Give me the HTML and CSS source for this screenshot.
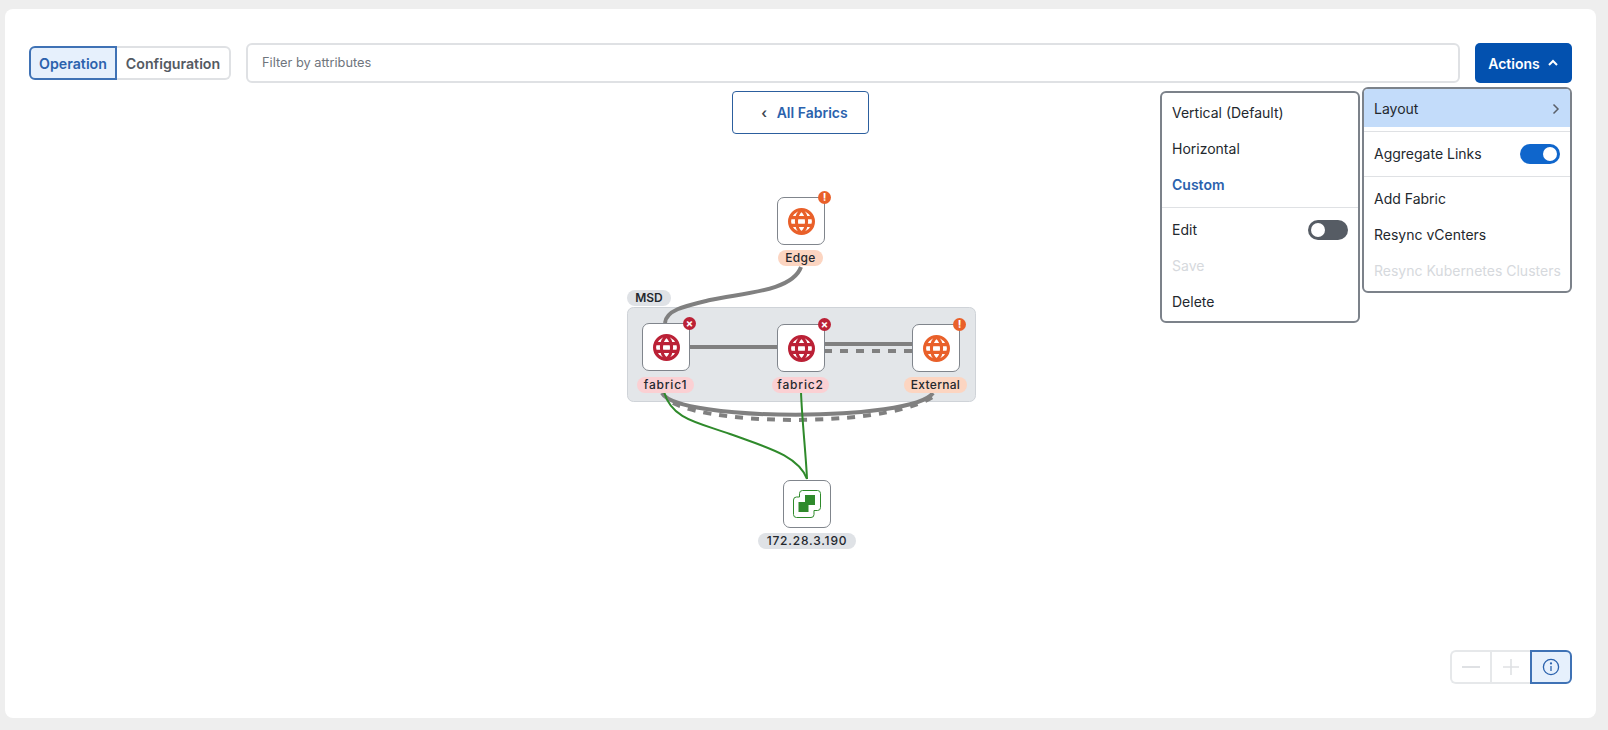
FILE: index.html
```html
<!DOCTYPE html>
<html lang="en">
<head>
    <meta charset="UTF-8">
    <meta name="viewport" content="width=device-width, initial-scale=1.0">
    <title>Fabrics Topology</title>
    <link rel="stylesheet" href="styles.css">
</head>
<body>

    <svg class="defs" width="0" height="0">
        <symbol id="globe" viewBox="0 0 28 28">
            <g fill="none" stroke="currentColor" stroke-width="3.2">
                <circle cx="14" cy="14" r="12.4"/>
                <path d="M14 2C7 7.5 7 20.5 14 26"/>
                <path d="M14 2C21 7.5 21 20.5 14 26"/>
                <path d="M2 10H26M2 18H26"/>
            </g>
        </symbol>
    </svg>

    <div class="card">
        <div class="toolbar">
            <div class="segmented">
                <button class="seg seg-active">Operation</button>
                <button class="seg">Configuration</button>
            </div>
            <div class="filter">Filter by attributes</div>
            <button class="actions">Actions
                <svg width="12" height="8" viewBox="0 0 12 8"><path d="M2 6L6 2L10 6" fill="none" stroke="#fff" stroke-width="2"/></svg>
            </button>
        </div>

        <div class="back-row">
            <button class="back"><span class="back-arrow">‹</span> All Fabrics</button>
        </div>

        <div class="stage">
            <svg class="links" width="361" height="380" viewBox="0 0 361 380">
                <rect class="group" x="7.5" y="127.5" width="348" height="94" rx="6"/>
                <g fill="none" stroke="#808080" stroke-width="4">
                    <path d="M181 87C172 112 120 113 90 120C65 126 46 130 45 143"/>
                    <path d="M69 167H157"/>
                    <path d="M204 164H292"/>
                    <path stroke-dasharray="8 8" d="M204 171H292"/>
                    <path d="M42 213C58 242 292 242 313 213"/>
                    <path stroke-dasharray="8 8" d="M53 223C100 247 280 247 318 213"/>
                </g>
                <g fill="none" stroke="#2f8a2b" stroke-width="2">
                    <path d="M44 212C52 240 80 243 110 254C145 267 178 275 187 299"/>
                    <path d="M181 212C182 240 186 275 187 299"/>
                </g>
            </svg>

            <div class="group-label">MSD</div>

            <div class="node node-edge warn">
                <svg class="globe" width="27" height="27"><use href="#globe"/></svg>
                <span class="badge">!</span>
            </div>
            <div class="label label-edge warn-bg">Edge</div>

            <div class="node node-f1 err">
                <svg class="globe" width="27" height="27"><use href="#globe"/></svg>
                <span class="badge">×</span>
            </div>
            <div class="label label-f1 err-bg">fabric1</div>

            <div class="node node-f2 err">
                <svg class="globe" width="27" height="27"><use href="#globe"/></svg>
                <span class="badge">×</span>
            </div>
            <div class="label label-f2 err-bg">fabric2</div>

            <div class="node node-ext warn">
                <svg class="globe" width="27" height="27"><use href="#globe"/></svg>
                <span class="badge">!</span>
            </div>
            <div class="label label-ext warn-bg">External</div>

            <div class="node node-vc">
                <svg width="28" height="28" viewBox="0 0 28 28">
                    <path d="M6.5 7V3.5a3 3 0 0 1 3-3H24.5a3 3 0 0 1 3 3V17.5a3 3 0 0 1-3 3H21V24.5a3 3 0 0 1-3 3H3.5a3 3 0 0 1-3-3V10a3 3 0 0 1 3-3Z" fill="none" stroke="#2f8a2b"/>
                    <rect x="12" y="5" width="10" height="10" fill="#2f8a2b"/>
                    <rect x="5.5" y="12" width="10" height="10" fill="#2f8a2b"/>
                </svg>
            </div>
            <div class="label label-vc">172.28.3.190</div>
        </div>

        <div class="zoom-row">
            <div class="zoom-controls">
                <button class="zoom-btn">
                    <svg width="20" height="20" viewBox="0 0 20 20"><path d="M1 10H19" stroke="#dfe1e4" stroke-width="2"/></svg>
                </button>
                <button class="zoom-btn">
                    <svg width="18" height="18" viewBox="0 0 18 18"><path d="M1 9H17M9 1V17" stroke="#dfe1e4" stroke-width="1.6"/></svg>
                </button>
                <button class="zoom-btn zoom-info">
                    <svg width="18" height="18" viewBox="0 0 18 18" fill="none" stroke="#2b62ad" stroke-width="1.3">
                        <circle cx="9" cy="9" r="7.6"/>
                        <path d="M9 8V13"/>
                        <circle cx="9" cy="5.4" r=".5"/>
                    </svg>
                </button>
            </div>
        </div>

        <div class="menu menu-sub">
            <div class="menu-item">Vertical (Default)</div>
            <div class="menu-item">Horizontal</div>
            <div class="menu-item selected">Custom</div>
            <div class="divider"></div>
            <div class="menu-item split">Edit <span class="toggle"></span></div>
            <div class="menu-item disabled">Save</div>
            <div class="menu-item">Delete</div>
        </div>

        <div class="menu menu-main">
            <div class="menu-item hovered split">Layout
                <svg width="8" height="12" viewBox="0 0 8 12"><path d="M1.5 1.5L6 6L1.5 10.5" fill="none" stroke="#5a6069" stroke-width="1.5"/></svg>
            </div>
            <div class="divider"></div>
            <div class="menu-item split">Aggregate Links <span class="toggle toggle-on"></span></div>
            <div class="divider"></div>
            <div class="menu-item">Add Fabric</div>
            <div class="menu-item">Resync vCenters</div>
            <div class="menu-item disabled">Resync Kubernetes Clusters</div>
        </div>
    </div>

</body>
</html>
```

FILE: styles.css
```css
* {
    box-sizing: border-box;
}

body {
    margin: 0;
    padding: 9px 12px 12px 5px;
    background-color: #eeeeee;
    font-family: Inter, "Liberation Sans", sans-serif;
    color: #23282e;
}

button {
    font-family: inherit;
}

.defs {
    position: absolute;
}

.card {
    position: relative;
    height: 709px;
    padding-top: 34px;
    background-color: #fff;
    border-radius: 8px;
}

.toolbar {
    display: flex;
    align-items: center;
    height: 40px;
    padding: 0 24px;
}

.segmented {
    display: flex;
    width: 202px;
    height: 34px;
    margin-right: 15px;
}

.seg {
    flex: 1;
    padding: 0;
    background: #fff;
    border: 2px solid #dfe1e4;
    border-left: none;
    border-radius: 0 6px 6px 0;
    font-size: 14.2px;
    font-weight: 600;
    color: #545a62;
}

.seg-active {
    flex: 0 0 88px;
    background: #e6f0fc;
    border: 2px solid #3f72b5;
    border-radius: 6px 0 0 6px;
    color: #2b62ad;
}

.filter {
    flex: 1;
    height: 40px;
    padding-left: 14px;
    border: 2px solid #dfe1e4;
    border-radius: 6px;
    font-size: 12.8px;
    line-height: 36px;
    color: #6f757d;
}

.actions {
    display: flex;
    align-items: center;
    justify-content: center;
    gap: 7px;
    width: 97px;
    height: 40px;
    margin-left: 15px;
    background: #0351af;
    border: none;
    border-radius: 5px;
    font-size: 14px;
    font-weight: 600;
    color: #fff;
}

.back-row {
    display: flex;
    justify-content: center;
    margin-top: 8px;
}

.back {
    width: 137px;
    height: 43px;
    padding-left: 14px;
    background: #fff;
    border: 1px solid #2c5f9e;
    border-radius: 4px;
    font-size: 14px;
    font-weight: 600;
    color: #2b62ad;
}

.back-arrow {
    margin-right: 6px;
    color: #3c4650;
}

.stage {
    position: relative;
    width: 361px;
    height: 380px;
    margin: 46px auto 0;
}

.links {
    position: absolute;
    left: 0;
    top: 0;
}

.group {
    fill: #e3e6e9;
    stroke: #cfd3d8;
}

.group-label {
    position: absolute;
    left: 7px;
    top: 110px;
    width: 44px;
    height: 16px;
    background: #dfe2e6;
    border-radius: 8px;
    font-size: 12px;
    font-weight: 600;
    line-height: 16px;
    text-align: center;
}

.node {
    position: absolute;
    display: flex;
    align-items: center;
    justify-content: center;
    width: 48px;
    height: 48px;
    background: #fff;
    border: 1px solid #80858c;
    border-radius: 7px;
}

.node-edge { left: 157px; top: 17px; }
.node-f1 { left: 22px; top: 143px; }
.node-f2 { left: 157px; top: 144px; }
.node-ext { left: 292px; top: 144px; }
.node-vc { left: 163px; top: 300px; }

.warn { color: #e9602a; }
.err { color: #bb2136; }

.badge {
    position: absolute;
    top: -7px;
    right: -7px;
    width: 13px;
    height: 13px;
    background: currentColor;
    border-radius: 50%;
    font-size: 11px;
    font-weight: 700;
    line-height: 13px;
    text-align: center;
    -webkit-text-fill-color: #fff;
}

.label {
    position: absolute;
    height: 16px;
    border-radius: 8px;
    background: #dfe2e6;
    font-size: 12px;
    font-weight: 500;
    line-height: 16px;
    letter-spacing: .3px;
    text-align: center;
}

.warn-bg { background: #fcd5c1; }
.err-bg { background: #fbd0d3; }

.label-edge { left: 158px; top: 70px; width: 45px; }
.label-f1 { left: 17px; top: 197px; width: 57px; letter-spacing: .8px; }
.label-f2 { left: 152px; top: 197px; width: 57px; letter-spacing: .8px; }
.label-ext { left: 284px; top: 197px; width: 63px; }
.label-vc { left: 138px; top: 353px; width: 98px; letter-spacing: .8px; }

.zoom-row {
    display: flex;
    justify-content: flex-end;
    margin-top: 90px;
    padding-right: 24px;
}

.zoom-controls {
    display: flex;
    width: 122px;
    height: 34px;
}

.zoom-btn {
    display: flex;
    align-items: center;
    justify-content: center;
    flex: 1;
    padding: 0;
    background: #fff;
    border: 2px solid #e6e8ea;
    border-right: none;
}

.zoom-btn:first-child {
    border-radius: 6px 0 0 6px;
}

.zoom-info {
    background: #e6f0fc;
    border: 2px solid #3f72b5;
    border-radius: 0 6px 6px 0;
}

.menu {
    position: absolute;
    background: #fff;
    border: 2px solid #7c828a;
    border-radius: 6px;
    font-size: 14px;
}

.menu-main {
    left: 1357px;
    top: 78px;
    width: 210px;
    padding-bottom: 2px;
}

.menu-sub {
    left: 1155px;
    top: 82px;
    width: 200px;
    padding: 2px 0 1px;
}

.menu-item {
    height: 36px;
    padding: 0 10px;
    line-height: 36px;
    white-space: nowrap;
}

.split {
    display: flex;
    align-items: center;
    justify-content: space-between;
}

.hovered {
    height: 38px;
    padding-top: 2px;
    background: #c3dcfa;
    border-radius: 4px 4px 0 0;
}

.selected {
    font-weight: 600;
    color: #2b62ad;
}

.disabled {
    color: #d6d9dd;
}

.divider {
    height: 1px;
    margin: 4px 0;
    background: #dfe1e4;
}

.toggle {
    position: relative;
    width: 40px;
    height: 20px;
    background: #565c64;
    border-radius: 10px;
}

.toggle::after {
    content: "";
    position: absolute;
    left: 3px;
    top: 3px;
    width: 14px;
    height: 14px;
    background: #fff;
    border-radius: 50%;
}

.toggle-on {
    background: #0f66cc;
}

.toggle-on::after {
    left: 23px;
}
```
